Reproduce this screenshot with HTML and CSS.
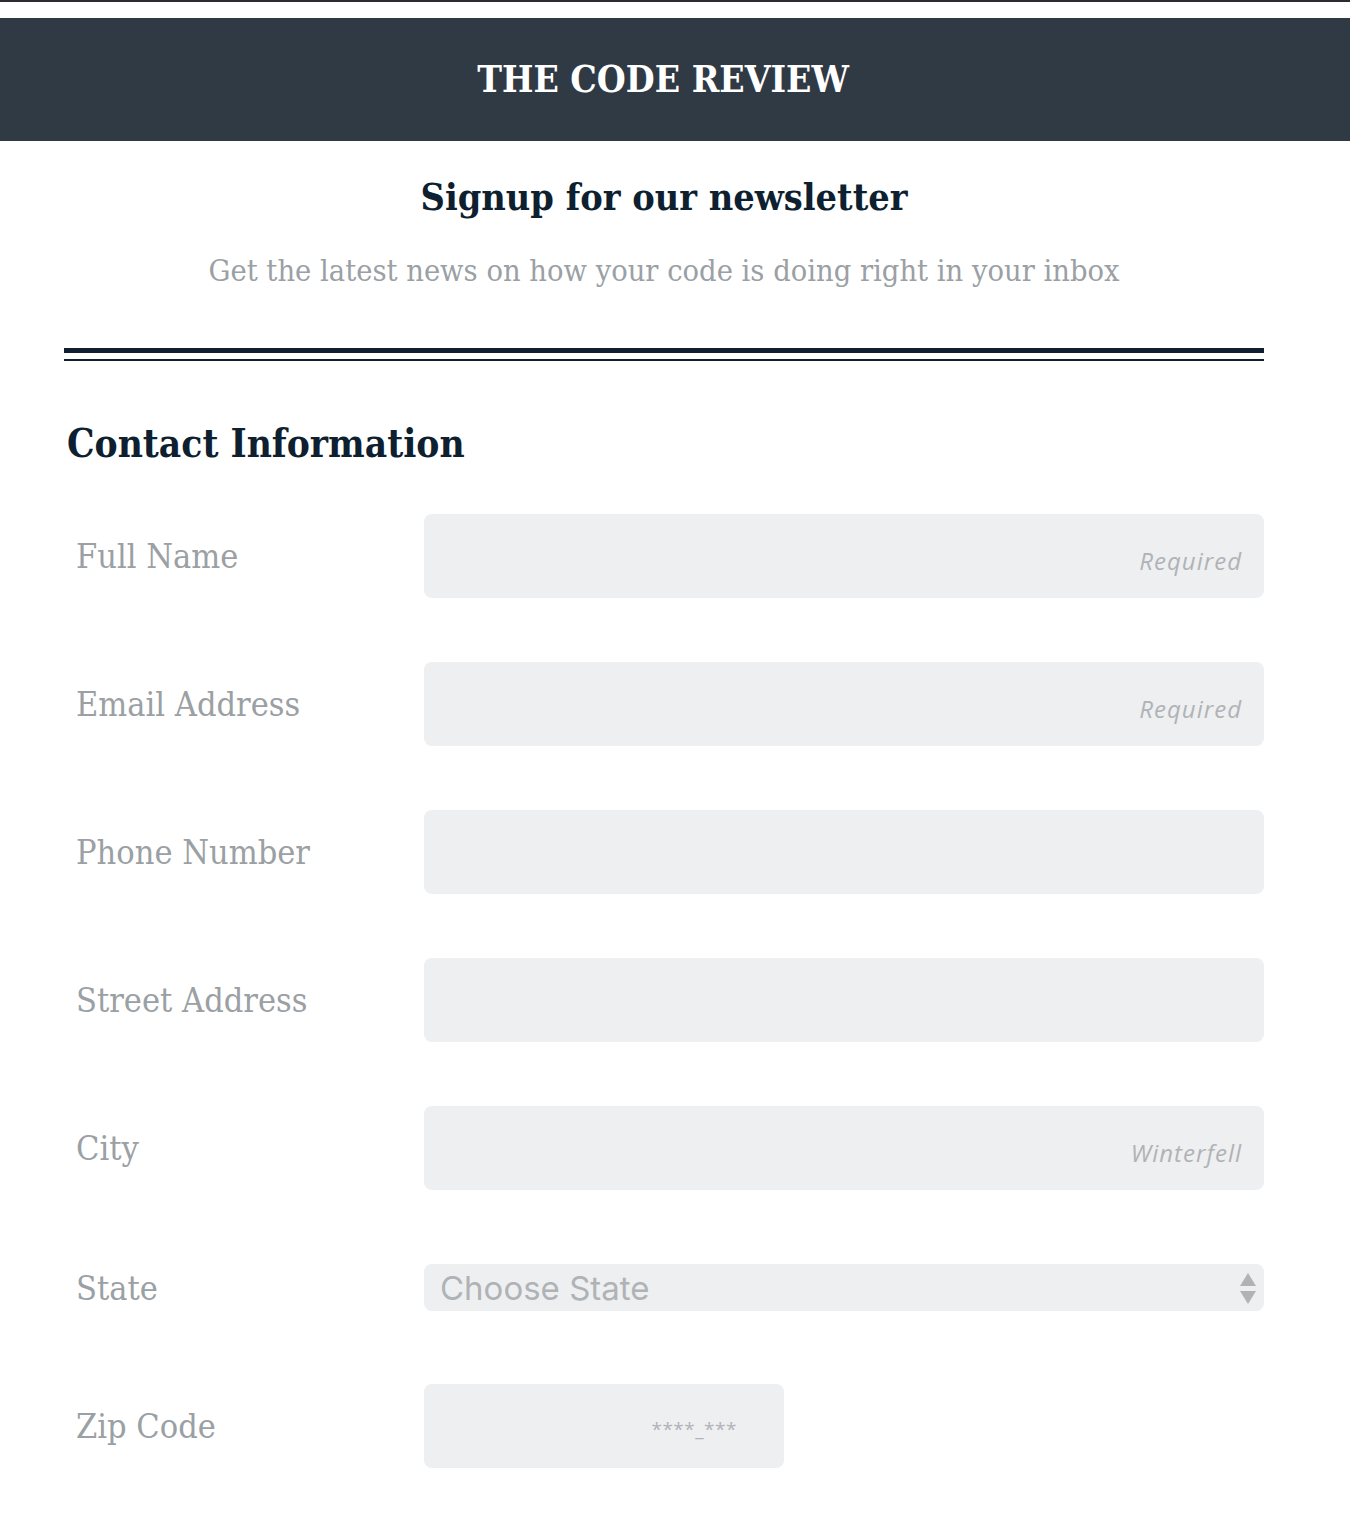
FILE: index.html
```html
<!DOCTYPE html>
<html lang="en">
<head>
<meta charset="utf-8">
<title>The Code Review</title>
<link rel="stylesheet" href="styles.css">
</head>
<body>
<div class="topline"></div>
<header class="masthead">
  <h1 class="brand">THE CODE REVIEW</h1>
</header>
<main class="content">
  <section class="intro">
    <h2 class="intro-title">Signup for our newsletter</h2>
    <p class="intro-sub">Get the latest news on how your code is doing right in your inbox</p>
  </section>
  <div class="rule"></div>
  <h3 class="section-title">Contact Information</h3>
  <form class="form">
    <div class="row">
      <label class="label" for="name">Full Name</label>
      <input class="field" id="name" type="text" placeholder="Required">
    </div>
    <div class="row">
      <label class="label" for="email">Email Address</label>
      <input class="field" id="email" type="email" placeholder="Required">
    </div>
    <div class="row">
      <label class="label" for="phone">Phone Number</label>
      <input class="field" id="phone" type="tel">
    </div>
    <div class="row">
      <label class="label" for="street">Street Address</label>
      <input class="field" id="street" type="text">
    </div>
    <div class="row">
      <label class="label" for="city">City</label>
      <input class="field" id="city" type="text" placeholder="Winterfell">
    </div>
    <div class="row row-select">
      <label class="label" for="state">State</label>
      <div class="select" id="state">
        <span class="select-text">Choose State</span>
        <svg class="select-arrows" width="18" height="34" viewBox="0 0 18 34" aria-hidden="true">
          <path d="M9 2 L17 15 L1 15 Z" fill="#b0b3b6"/>
          <path d="M1 20 L17 20 L9 33 Z" fill="#b0b3b6"/>
        </svg>
      </div>
    </div>
    <div class="row">
      <label class="label" for="zip">Zip Code</label>
      <input class="field field-zip" id="zip" type="text" placeholder="****_***">
    </div>
  </form>
</main>
</body>
</html>
```

FILE: styles.css
```css
html, body {
  margin: 0;
  padding: 0;
  background: #fff;
}

body {
  font-family: "DejaVu Serif Condensed", "DejaVu Serif", "Liberation Serif", serif;
  font-stretch: condensed;
}

.topline {
  height: 2px;
  background: #2a2d31;
  margin-bottom: 16px;
}

.masthead {
  height: 123px;
  background: #303a45;
  display: flex;
  align-items: center;
  justify-content: center;
  padding-right: 24px;
}

.brand {
  margin: 0;
  color: #fff;
  font-size: 37px;
  font-weight: bold;
  line-height: 1;
}

.content {
  width: 1200px;
  margin: 0 0 0 64px;
  padding-bottom: 66px;
}

.intro {
  text-align: center;
  padding-top: 34px;
}

.intro-title {
  margin: 0;
  color: #0e1f30;
  font-size: 37.5px;
  font-weight: bold;
  line-height: 44px;
}

.intro-sub {
  margin: 32px 0 0;
  color: #9aa0a4;
  font-size: 30.5px;
  line-height: 40px;
}

.rule {
  margin-top: 57px;
  height: 13px;
  border-top: 5px solid #0e1f30;
  border-bottom: 2px solid #0e1f30;
  box-sizing: border-box;
}

.section-title {
  margin: 58px 0 0 3px;
  color: #0e1f30;
  font-size: 38.5px;
  font-weight: bold;
  line-height: 50px;
}

.form {
  margin-top: 45px;
  display: flex;
  flex-direction: column;
  gap: 64px;
}

.row {
  display: flex;
  align-items: center;
}

.row-select {
  min-height: 67px;
  margin-bottom: -1px;
}

.label {
  flex: 0 0 360px;
  box-sizing: border-box;
  padding-left: 12px;
  color: #9aa0a4;
  font-size: 34px;
  line-height: 44px;
}

.field {
  flex: 0 0 840px;
  width: 840px;
  height: 84px;
  box-sizing: border-box;
  border: none;
  border-radius: 8px;
  background: #eeeff1;
  padding: 9px 22px 0;
  text-align: right;
  font-family: "Open Sans", "Roboto", sans-serif;
  font-style: italic;
  font-size: 24px;
  letter-spacing: 1px;
  color: #333;
  outline: none;
}

.field::placeholder {
  color: #b0b3b6;
  opacity: 1;
}

.field-zip {
  flex: 0 0 360px;
  width: 360px;
  font-style: normal;
  font-size: 19px;
  padding-right: 47px;
  padding-top: 6px;
  letter-spacing: 0.5px;
}

.select {
  flex: 0 0 840px;
  width: 840px;
  height: 47px;
  box-sizing: border-box;
  border-radius: 8px;
  background: #eeeff1;
  display: flex;
  align-items: center;
  justify-content: space-between;
  padding: 0 7px 0 16px;
}

.select-text {
  font-family: "Inter", "Liberation Sans", sans-serif;
  font-stretch: normal;
  font-size: 33px;
  color: #b0b3b6;
}

.select-arrows {
  display: block;
}
```
